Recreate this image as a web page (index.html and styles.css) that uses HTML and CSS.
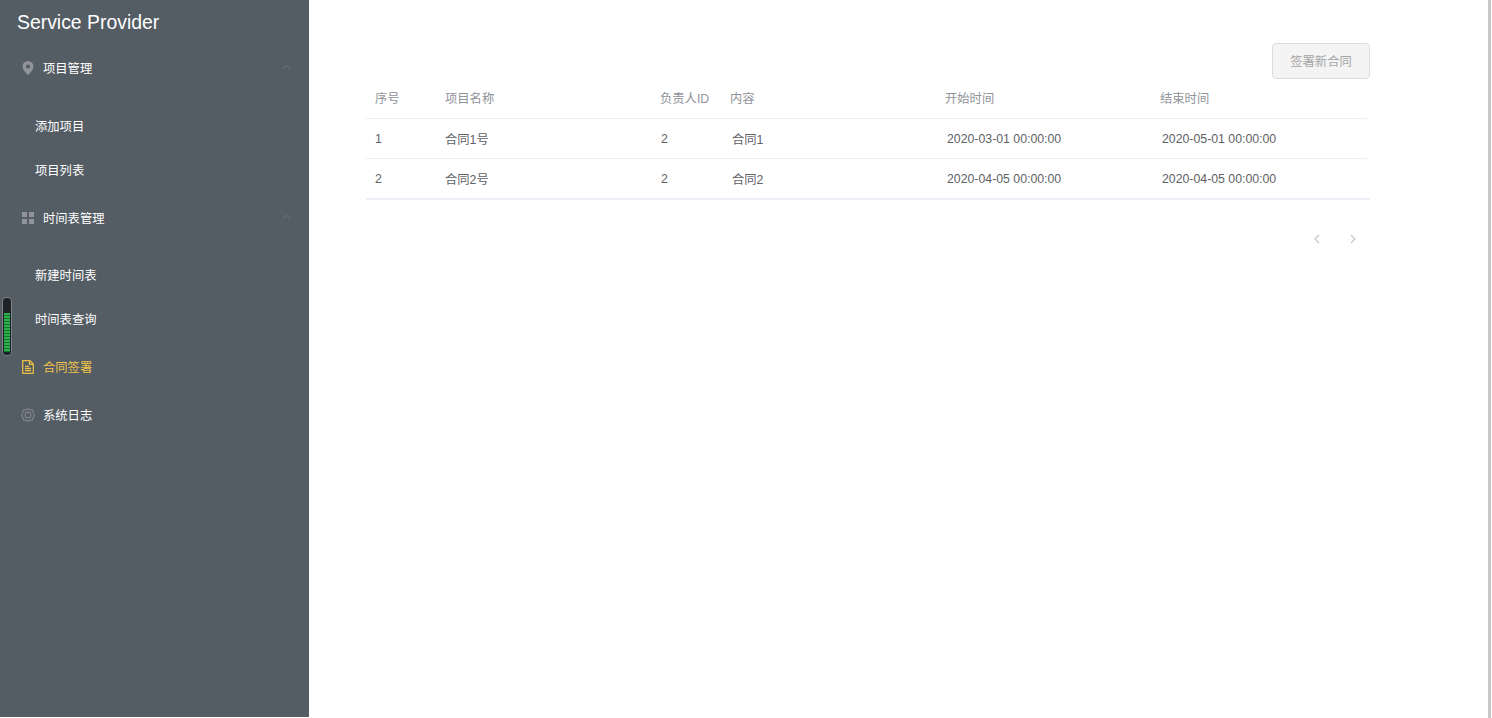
FILE: index.html
```html
<!DOCTYPE html>
<html lang="zh-CN">
<head>
<meta charset="utf-8">
<title>Service Provider</title>
<link rel="stylesheet" href="styles.css">
</head>
<body>
<div class="app">
  <aside class="sidebar">
    <h1 class="brand">Service Provider</h1>
    <nav class="menu">
      <div class="title">
        <svg class="icon" viewBox="0 0 12 14"><path fill="#909399" fill-rule="evenodd" d="M6 0a5.500 5.500 0 0 1 5.500 5.500C11.500 9 8 12 6 14 4 12 .5 9 .5 5.500A5.500 5.500 0 0 1 6 0zm0 3.400a2.100 2.100 0 1 0 0 4.200 2.100 2.100 0 0 0 0-4.200z"/></svg>
        <span>项目管理</span>
        <svg class="caret" viewBox="0 0 10 6"><path d="M1 5l4-4 4 4" fill="none" stroke="#6f767d" stroke-width="1"/></svg>
      </div>
      <ul class="sub sub-a">
        <li>添加项目</li>
        <li>项目列表</li>
      </ul>
      <div class="title">
        <svg class="icon" viewBox="0 0 12 14"><path fill="#909399" d="M0 1h5v5H0zM7 1h5v5H7zM0 8h5v5H0zM7 8h5v5H7z"/></svg>
        <span>时间表管理</span>
        <svg class="caret" viewBox="0 0 10 6"><path d="M1 5l4-4 4 4" fill="none" stroke="#6f767d" stroke-width="1"/></svg>
      </div>
      <ul class="sub sub-b">
        <li>新建时间表</li>
        <li>时间表查询</li>
      </ul>
      <div class="title active">
        <svg class="icon" viewBox="0 0 12 14"><path fill="none" stroke="#e8bd45" stroke-width="1.300" d="M.7.7h7.200l3.400 3.400v9.200H.7zM7.500 1v3.300h3.500M3 6.400h4M3 8.500h6M3 10.600h6"/></svg>
        <span>合同签署</span>
      </div>
      <div class="title">
        <svg class="icon gear" viewBox="0 0 14 14"><path fill="none" stroke="#80868c" stroke-width="1.100" d="M7 .7l2 1.200 2.500-.1.600 2.400L13.500 7l-1.400 2.800-.6 2.400-2.500-.1-2 1.200-2-1.200-2.500.1-.6-2.400L.5 7l1.400-2.800.6-2.400 2.500.1z"/><circle cx="7" cy="7" r="2.900" fill="none" stroke="#80868c" stroke-width="1.100"/></svg>
        <span>系统日志</span>
      </div>
    </nav>
    <div class="meter" aria-hidden="true"><div class="meter-fill"></div></div>
  </aside>
  <main class="main">
    <div class="toolbar"><button class="btn" disabled>签署新合同</button></div>
    <div class="table">
      <div class="row head">
        <div>序号</div><div>项目名称</div><div>负责人ID</div><div>内容</div><div>开始时间</div><div>结束时间</div>
      </div>
      <div class="row body">
        <div>1</div><div>合同1号</div><div>2</div><div>合同1</div><div>2020-03-01 00:00:00</div><div>2020-05-01 00:00:00</div>
      </div>
      <div class="row body last">
        <div>2</div><div>合同2号</div><div>2</div><div>合同2</div><div>2020-04-05 00:00:00</div><div>2020-04-05 00:00:00</div>
      </div>
    </div>
    <div class="pager">
      <svg viewBox="0 0 6 10"><path d="M5 1L1 5l4 4" fill="none" stroke="#c0c4cc" stroke-width="1.100"/></svg>
      <svg viewBox="0 0 6 10"><path d="M1 1l4 4-4 4" fill="none" stroke="#c0c4cc" stroke-width="1.100"/></svg>
    </div>
  </main>
  <div class="edge"></div>
</div>
</body>
</html>
```
FILE: styles.css
```css
* { box-sizing: border-box; }
html, body { margin: 0; height: 100%; overflow: hidden; }
body {
  background: #fff;
  font-family: "Liberation Sans", "Noto Sans CJK SC", sans-serif;
  font-size: 12.3px;
}
.app { display: flex; height: 717px; }
.sidebar {
  position: relative;
  flex: 0 0 309px;
  background: #545c64;
  color: #fff;
}
.brand {
  margin: 0;
  height: 44px;
  padding-left: 17px;
  font-size: 19.4px;
  font-weight: 400;
  line-height: 44px;
}
.title {
  display: flex;
  align-items: center;
  height: 48px;
  padding-left: 22px;
  position: relative;
}
.title.active { color: #f2c44a; }
.icon { width: 12px; height: 14px; flex: none; }
.icon + span { margin-left: 9px; }
.gear { width: 14px; margin-left: -1px; margin-right: -1px; }
.caret {
  position: absolute;
  right: 18px;
  top: 20px;
  width: 9px;
  height: 6px;
}
.sub { list-style: none; margin: 0; padding: 0 0 0 35px; }
.sub li { height: 43.5px; line-height: 43.5px; }
.sub-a { padding-top: 14px; padding-bottom: 1px; }
.sub-b { padding-top: 12px; padding-bottom: 1px; }
.sub-b li { height: 44px; line-height: 44px; }
.meter {
  position: absolute;
  left: 2px;
  top: 297px;
  width: 10px;
  height: 59px;
  padding: 1px;
  border: 1px solid #7b8187;
  border-radius: 4px;
  background: #1d2226;
}
.meter-fill {
  height: 39px;
  margin-top: 14px;
  background: repeating-linear-gradient(#2bb04c 0 2px, #146f30 2px 3px);
}
.main { flex: 1; min-width: 0; padding: 43px 0 0 57px; }
.toolbar { display: flex; justify-content: flex-end; width: 1004px; }
.btn {
  width: 98px;
  height: 36px;
  padding: 0;
  border: 1px solid #dcdcdc;
  border-radius: 4px;
  background: #f4f4f4;
  color: #a6a6a6;
  font: inherit;
}
.table { width: 1004px; }
.row {
  display: grid;
  align-items: center;
  height: 40px;
  margin-right: 3px;
  padding-left: 9px;
  border-bottom: 1px solid #ebeef5;
}
.head { grid-template-columns: 70px 215px 70px 215px 215px 1fr; color: #909399; padding-bottom: 2px; }
.body { grid-template-columns: 70px 216px 71px 215px 215px 1fr; color: #606266; }
.last { height: 41px; padding-top: 1px; margin-right: 0; border-bottom-width: 2px; }
.pager { display: flex; gap: 30px; width: 1004px; justify-content: flex-end; margin-top: 34px; padding-right: 14px; }
.pager svg { width: 6px; height: 10px; }
.edge { flex: 0 0 3px; margin-right: 1px; background: #c8c8c8; height: 718px; }
```
